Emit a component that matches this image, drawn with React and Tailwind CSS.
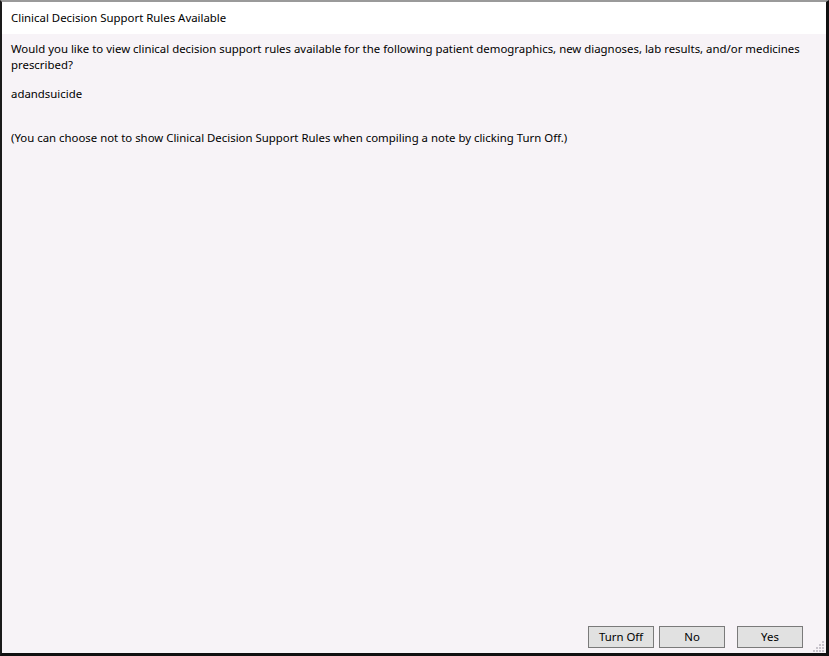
// Clinical Decision Support dialog
const font = { fontFamily: '"Noto Sans", "Open Sans", sans-serif' };

const Grip = () => (
  <svg width="12" height="12" viewBox="0 0 12 12" className="absolute right-[1px] bottom-[1px]">
    {[[9, 1], [9, 4], [6, 4], [9, 7], [6, 7], [3, 7], [9, 10], [6, 10], [3, 10], [0, 10]].map(([x, y], i) => (
      <rect key={i} x={x} y={y} width="2" height="2" fill="#c8c4cc" />
    ))}
  </svg>
);

const Btn = ({ children, className = "" }) => (
  <button
    className={
      "h-[22px] w-[66px] bg-[#e1e1e1] border border-[#7a7a7a] text-[11.4px] text-black leading-none " + className
    }
  >
    {children}
  </button>
);

export default function App() {
  return (
    <div
      className="w-[829px] h-[656px] flex flex-col bg-[#f7f3f7] border-t-2 border-t-[#9a9a9a] border-l-2 border-l-[#1a1a1a] border-r-[3px] border-r-[#101010] border-b-[3px] border-b-[#101010] text-black"
      style={font}
    >
      <div className="h-[32px] shrink-0 bg-white flex items-center pl-[9px] text-[11.4px]">
        Clinical Decision Support Rules Available
      </div>
      <div className="relative flex-1 flex flex-col pl-[9px] pr-[2px] pt-[7px] text-[11.4px] leading-[16px]">
        <p>
          Would you like to view clinical decision support rules available for the following patient demographics, new diagnoses, lab results, and/or medicines prescribed?
        </p>
        <p className="mt-[13px]">adandsuicide</p>
        <p className="mt-[28px]">
          (You can choose not to show Clinical Decision Support Rules when compiling a note by clicking Turn Off.)
        </p>
        <div className="flex-1" />
        <div className="flex justify-end pr-[21px] pb-[5px]">
          <Btn>Turn Off</Btn>
          <Btn className="ml-[5px]">No</Btn>
          <Btn className="ml-[12px]">Yes</Btn>
        </div>
        <Grip />
      </div>
    </div>
  );
}
